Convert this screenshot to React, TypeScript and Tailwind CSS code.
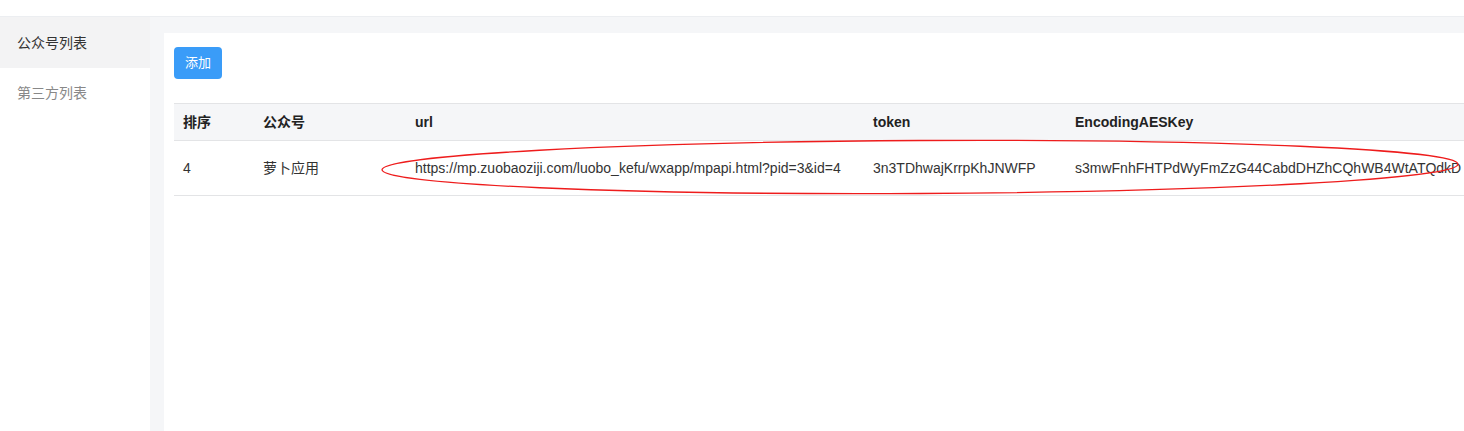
import React from "react";

const font = { fontFamily: '"Liberation Sans", Arial, "Noto Sans CJK SC", sans-serif' };

export default function App() {
  return (
    <div className="w-[1464px] h-[431px] overflow-hidden bg-[#f5f6f8] flex flex-col text-[#333]" style={font}>
      <div className="h-[17px] bg-white border-b border-[#eceef1] shrink-0" />
      <div className="flex flex-1 min-h-0">
        <div className="w-[150px] bg-white shrink-0 flex flex-col">
          <div className="h-[51px] bg-[#f3f3f4] pl-[17px] pt-[1px] flex items-center text-[14px] text-[#333]">公众号列表</div>
          <div className="h-[50px] pl-[17px] pt-[1px] flex items-center text-[14px] text-[#888]">第三方列表</div>
        </div>
        <div className="flex-1 min-w-0 pl-[14px] pt-[16px]">
          <div className="bg-white h-full relative pl-[10px] pt-[14px] overflow-hidden">
            <button className="w-[48px] h-[32px] rounded-[4px] bg-[#3a9cf8] text-white text-[13px] flex items-center justify-center">添加</button>
            <table className="mt-[24px] border-collapse text-[14px] table-fixed w-[1400px]">
              <colgroup>
                <col className="w-[80px]" />
                <col className="w-[152px]" />
                <col className="w-[458px]" />
                <col className="w-[202px]" />
                <col className="w-[508px]" />
              </colgroup>
              <thead>
                <tr className="bg-[#f5f6f8] border-t border-b border-[#e3e4e6] h-[37px]">
                  <th className="text-left font-bold pl-[9px] text-[#222]">排序</th>
                  <th className="text-left font-bold pl-[9px] text-[#222]">公众号</th>
                  <th className="text-left font-bold pl-[9px] text-[#222]">url</th>
                  <th className="text-left font-bold pl-[9px] text-[#222]">token</th>
                  <th className="text-left font-bold pl-[9px] text-[#222]">EncodingAESKey</th>
                </tr>
              </thead>
              <tbody>
                <tr className="border-b border-[#e3e4e6] h-[55px]">
                  <td className="pl-[9px] whitespace-nowrap">4</td>
                  <td className="pl-[9px] whitespace-nowrap">萝卜应用</td>
                  <td className="pl-[9px] whitespace-nowrap">https://mp.zuobaoziji.com/luobo_kefu/wxapp/mpapi.html?pid=3&amp;id=4</td>
                  <td className="pl-[9px] whitespace-nowrap">3n3TDhwajKrrpKhJNWFP</td>
                  <td className="pl-[9px] whitespace-nowrap">s3mwFnhFHTPdWyFmZzG44CabdDHZhCQhWB4WtATQdkD</td>
                </tr>
              </tbody>
            </table>
            <svg className="absolute left-[214px] top-[103px] pointer-events-none" width="1090" height="64" viewBox="0 0 1090 64">
              <ellipse cx="542" cy="31" rx="538" ry="26.5" fill="none" stroke="#ee1c1c" strokeWidth="1.3" transform="rotate(-0.3 542 31)" />
            </svg>
          </div>
        </div>
      </div>
    </div>
  );
}
